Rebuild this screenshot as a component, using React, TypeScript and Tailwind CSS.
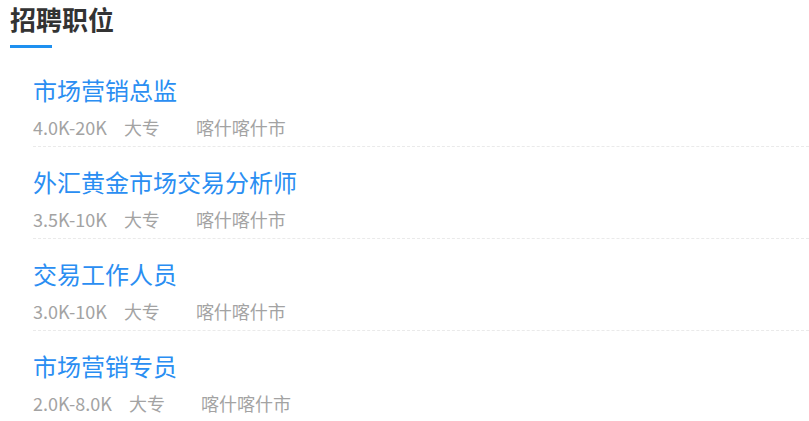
const jobs = [
  { title: "市场营销总监", salary: "4.0K-20K", edu: "大专", city: "喀什喀什市" },
  { title: "外汇黄金市场交易分析师", salary: "3.5K-10K", edu: "大专", city: "喀什喀什市" },
  { title: "交易工作人员", salary: "3.0K-10K", edu: "大专", city: "喀什喀什市" },
  { title: "市场营销专员", salary: "2.0K-8.0K", edu: "大专", city: "喀什喀什市" },
];

export default function App() {
  return (
    <div
      className="h-[421px] w-[809px] overflow-hidden bg-white pl-[10px]"
      style={{ fontFamily: '"Noto Sans CJK SC", "Noto Sans", sans-serif' }}
    >
      <h2 className="text-[26px] font-bold leading-[38px] text-[#333]">招聘职位</h2>
      <div className="mt-[7px] h-[3px] w-[42px] bg-[#1e90f0]" />
      <ul className="mt-[7px] pl-[23px]">
        {jobs.map((job) => (
          <li
            key={job.title}
            className="border-b border-dashed border-[#eaeaea] pt-[19px] pb-[6px] last:border-b-0"
          >
            <a href="#" className="block text-[24px] leading-[32px] text-[#2a8ef2]">
              {job.title}
            </a>
            <p className="mt-[8px] text-[18px] leading-[26px] text-[#a3a3a3]">
              <span className="mr-[17px]">{job.salary}</span>
              <span className="mr-[36px]">{job.edu}</span>
              <span>{job.city}</span>
            </p>
          </li>
        ))}
      </ul>
    </div>
  );
}
